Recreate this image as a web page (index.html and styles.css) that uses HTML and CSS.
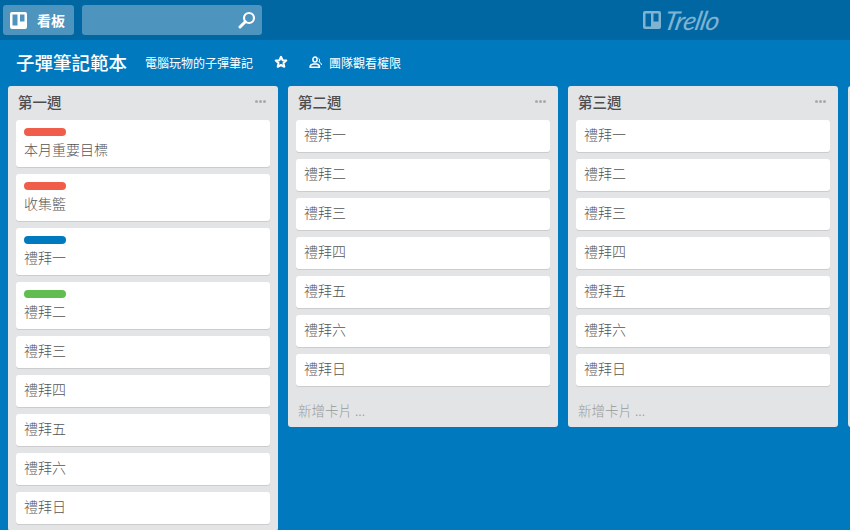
FILE: index.html
```html
<!DOCTYPE html>
<html lang="zh-Hant">
<head>
<meta charset="utf-8">
<title>子彈筆記範本</title>
<link rel="stylesheet" href="styles.css">
</head>
<body>
<header class="topbar">
  <a class="boards-btn">
    <svg class="boards-icon" width="17" height="17" viewBox="0 0 17 17"><path fill="#fff" fill-rule="evenodd" d="M2 0h13a2 2 0 0 1 2 2v13a2 2 0 0 1-2 2H2a2 2 0 0 1-2-2V2a2 2 0 0 1 2-2zM2.500 2.500v11h5v-11zM10 2.500v7h4.500v-7z"/></svg>
    <span>看板</span>
  </a>
  <div class="search">
    <svg width="18" height="18" viewBox="0 0 18 18"><circle cx="11" cy="7" r="5" fill="none" stroke="#fff" stroke-width="2.200"/><path d="M7.300 10.700 2 16" stroke="#fff" stroke-width="3" stroke-linecap="round"/></svg>
  </div>
  <div class="logo">
    <svg width="18" height="18" viewBox="0 0 18 18"><path fill="#fff" fill-rule="evenodd" d="M2 0h14a2 2 0 0 1 2 2v14a2 2 0 0 1-2 2H2a2 2 0 0 1-2-2V2a2 2 0 0 1 2-2zM2.500 2.500v13h5.500v-13zM10.500 2.500v8h5v-8z"/></svg>
    <span class="wordmark">Trello</span>
  </div>
</header>
<section class="board-head">
  <h1>子彈筆記範本</h1>
  <span class="board-desc">電腦玩物的子彈筆記</span>
  <svg class="star" width="14" height="14" viewBox="0 0 14 14"><path fill="none" stroke="#fff" stroke-width="2" stroke-linejoin="round" d="M7 1.800l1.600 3.400 3.700.4-2.800 2.500.8 3.700L7 10l-3.300 1.800.8-3.700L1.700 5.600l3.700-.4z"/></svg>
  <svg class="team-icon" width="13" height="13" viewBox="0 0 13 13"><g fill="none" stroke="#fff"><ellipse cx="6" cy="3.600" rx="2.100" ry="2.500" stroke-width="1.500"/><path d="M1 11.200c0-2.200 2-3 3.500-3.200h3c1.500.2 3 1 3 3.200z" stroke-width="1.500" stroke-linejoin="round"/><path d="M9.500 2.200c1.200.4 1.400 2.800.4 3.800 1.300.4 2.600 1.200 2.600 3" stroke-width="1"/></g></svg>
  <span class="team-label">團隊觀看權限</span>
</section>
<main class="lists">
  <section class="list">
    <div class="list-head"><h2>第一週</h2><span class="dots"><i></i><i></i><i></i></span></div>
    <article class="card"><span class="label red"></span><p>本月重要目標</p></article>
    <article class="card"><span class="label red"></span><p>收集籃</p></article>
    <article class="card"><span class="label blue"></span><p>禮拜一</p></article>
    <article class="card"><span class="label green"></span><p>禮拜二</p></article>
    <article class="card"><p>禮拜三</p></article>
    <article class="card"><p>禮拜四</p></article>
    <article class="card"><p>禮拜五</p></article>
    <article class="card"><p>禮拜六</p></article>
    <article class="card"><p>禮拜日</p></article>
  </section>
  <section class="list">
    <div class="list-head"><h2>第二週</h2><span class="dots"><i></i><i></i><i></i></span></div>
    <article class="card"><p>禮拜一</p></article>
    <article class="card"><p>禮拜二</p></article>
    <article class="card"><p>禮拜三</p></article>
    <article class="card"><p>禮拜四</p></article>
    <article class="card"><p>禮拜五</p></article>
    <article class="card"><p>禮拜六</p></article>
    <article class="card"><p>禮拜日</p></article>
    <div class="add">新增卡片 ...</div>
  </section>
  <section class="list">
    <div class="list-head"><h2>第三週</h2><span class="dots"><i></i><i></i><i></i></span></div>
    <article class="card"><p>禮拜一</p></article>
    <article class="card"><p>禮拜二</p></article>
    <article class="card"><p>禮拜三</p></article>
    <article class="card"><p>禮拜四</p></article>
    <article class="card"><p>禮拜五</p></article>
    <article class="card"><p>禮拜六</p></article>
    <article class="card"><p>禮拜日</p></article>
    <div class="add">新增卡片 ...</div>
  </section>
  <section class="list list-peek"></section>
</main>
</body>
</html>
```
FILE: styles.css
```css
* { box-sizing: border-box; }
html, body { margin: 0; height: 530px; overflow: hidden; }
body {
  background: #0079bf;
  font-family: "Noto Sans CJK TC", "Liberation Sans", sans-serif;
  color: #4d4d4d;
  width: 850px;
}
.topbar {
  height: 40px;
  background: #0067a3;
  display: flex;
  align-items: center;
  padding-left: 3px;
}
.boards-btn {
  width: 71px;
  height: 30px;
  border-radius: 3px;
  background: #4d94bf;
  display: flex;
  align-items: center;
  padding-left: 7px;
  gap: 10px;
  color: #fff;
  font-size: 14px;
  font-weight: 700;
}
.search {
  margin-left: 8px;
  width: 180px;
  height: 30px;
  border-radius: 3px;
  background: #4d94bf;
  display: flex;
  align-items: center;
  justify-content: flex-end;
  padding-right: 6px;
}
.logo {
  margin-left: 381px;
  display: flex;
  align-items: center;
  gap: 4px;
  opacity: .5;
  color: #fff;
}
.wordmark {
  display: inline-block;
  font-family: "Lato", sans-serif;
  font-style: italic;
  font-size: 26px;
  line-height: 24px;
  letter-spacing: -.6px;
  transform: skewX(-12deg);
}
.board-head {
  height: 46px;
  padding-bottom: 2px;
  display: flex;
  align-items: center;
  padding-left: 16px;
  color: #fff;
}
.board-head h1 {
  margin: 0;
  font-size: 18.500px;
  line-height: 44px;
  font-weight: 500;
}
.board-desc { margin-left: 18px; font-size: 12px; }
.star { margin-left: 21px; }
.team-icon { margin-left: 21px; }
.team-label { margin-left: 7px; font-size: 12px; }
.lists {
  display: flex;
  align-items: flex-start;
  gap: 10px;
  padding-left: 8px;
  height: 444px;
  overflow: hidden;
}
.list {
  flex: none;
  width: 270px;
  background: #e2e4e6;
  border-radius: 3px;
  padding: 0 8px;
}
.list-peek { height: 341px; }
.list-head {
  height: 34px;
  padding-bottom: 3px;
  display: flex;
  align-items: center;
  justify-content: space-between;
  padding-left: 2px;
  padding-right: 4px;
}
.list-head h2 {
  margin: 0;
  font-size: 14.500px;
  font-weight: 500;
  color: #4d4d4d;
}
.dots { display: flex; gap: 1px; }
.dots i { width: 3px; height: 3px; border-radius: 50%; background: #aaa; }
.card {
  background: #fff;
  border-radius: 3px;
  box-shadow: 0 1px 0 #ccc;
  padding: 6px 8px 0;
  margin-bottom: 7px;
  min-height: 32px;
}
.card p {
  margin: 0;
  font-size: 14px;
  line-height: 16px;
  font-weight: 300;
  color: #555;
}
.card:has(.label) { padding-top: 8px; }
.label {
  display: block;
  width: 42px;
  height: 8px;
  border-radius: 4px;
  margin-bottom: 5px;
}
.label + p { padding-bottom: 10px; }
.red { background: #f05d4a; }
.blue { background: #0079bf; }
.green { background: #61bd4f; }
.add {
  height: 34px;
  margin: 0 -8px;
  padding-left: 10px;
  display: flex;
  align-items: center;
  font-size: 13.500px;
  font-weight: 300;
  color: #999;
}
```
